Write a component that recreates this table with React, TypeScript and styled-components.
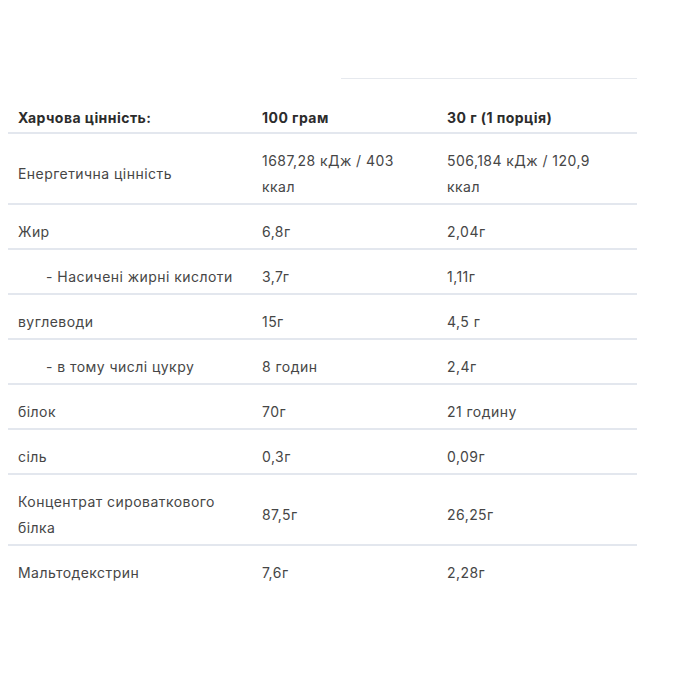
import React from 'react'
import styled, { createGlobalStyle } from 'styled-components'

const GlobalStyle = createGlobalStyle`
  body {
    margin: 8px;
    background: #fff;
    font-family: Inter, "Noto Sans", "Liberation Sans", sans-serif;
    color: #333;
  }
`

type Row = {
  name: string
  per100: string
  perServing: string
  sub?: boolean
}

const rows: Row[] = [
  { name: 'Енергетична цінність', per100: '1687,28 кДж / 403 ккал', perServing: '506,184 кДж / 120,9 ккал' },
  { name: 'Жир', per100: '6,8г', perServing: '2,04г' },
  { name: '- Насичені жирні кислоти', per100: '3,7г', perServing: '1,11г', sub: true },
  { name: 'вуглеводи', per100: '15г', perServing: '4,5 г' },
  { name: '- в тому числі цукру', per100: '8 годин', perServing: '2,4г', sub: true },
  { name: 'білок', per100: '70г', perServing: '21 годину' },
  { name: 'сіль', per100: '0,3г', perServing: '0,09г' },
  { name: 'Концентрат сироваткового білка', per100: '87,5г', perServing: '26,25г' },
  { name: 'Мальтодекстрин', per100: '7,6г', perServing: '2,28г' },
]

export default function App() {
  return (
    <>
      <GlobalStyle />
      <Wrapper>
        <TopRule />
        <Table>
          <colgroup>
            <col style={{ width: 244 }} />
            <col style={{ width: 185 }} />
            <col />
          </colgroup>
          <thead>
            <tr>
              <HeadCell>Харчова цінність:</HeadCell>
              <HeadCell>100 грам</HeadCell>
              <HeadCell>30 г (1 порція)</HeadCell>
            </tr>
          </thead>
          <tbody>
            {rows.map((r, i) => (
              <BodyRow key={i} $last={i === rows.length - 1}>
                <Cell $sub={r.sub}>{r.name}</Cell>
                <Cell>{r.per100}</Cell>
                <Cell>{r.perServing}</Cell>
              </BodyRow>
            ))}
          </tbody>
        </Table>
      </Wrapper>
    </>
  )
}

const Wrapper = styled.div`
  width: 629px;
  padding-top: 70px;
`

const TopRule = styled.div`
  margin-left: auto;
  width: 296px;
  height: 1px;
  background: #e6e9ee;
  margin-bottom: 21px;
`

const Table = styled.table`
  width: 100%;
  border-collapse: collapse;
  table-layout: fixed;
  font-size: 14px;
  line-height: 26px;
  letter-spacing: 0.45px;
`

const HeadCell = styled.th`
  text-align: left;
  font-weight: 700;
  color: #2c2c2c;
  padding: 5px 16px 1px 10px;
  border-bottom: 2px solid #e3e7ee;
  vertical-align: middle;
`

const BodyRow = styled.tr<{ $last?: boolean }>`
  border-bottom: ${(p) => (p.$last ? 'none' : '2px solid #e3e7ee')};
`

const Cell = styled.td<{ $sub?: boolean }>`
  padding: 14px 16px 3px ${(p) => (p.$sub ? '38px' : '10px')};
  color: #464646;
  vertical-align: middle;
`
